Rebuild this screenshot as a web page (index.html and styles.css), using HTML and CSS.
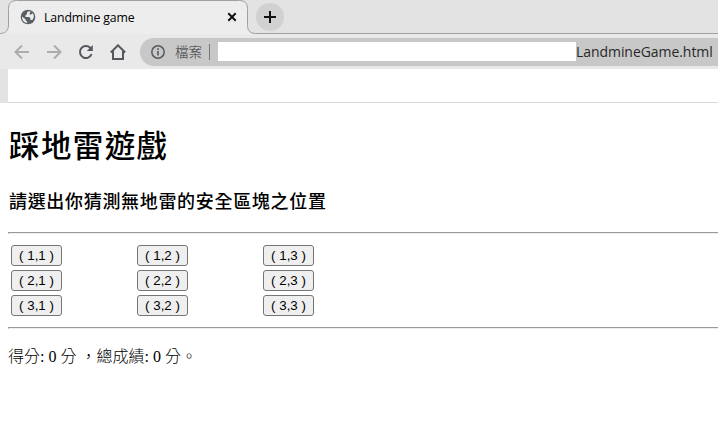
FILE: index.html
```html
<!DOCTYPE html>
<html lang="zh-Hant">
<head>
<meta charset="utf-8">
<title>Landmine game</title>
<link rel="stylesheet" href="styles.css">
</head>
<body>
<header class="browser">
  <div class="tabs">
    <svg class="tab-shape" width="718" height="34" viewBox="0 0 718 34">
      <path d="M0 34V33.5C5 33.5 8.500 31 8.500 25V8.500Q8.500.5 16.500.5H239.500Q247.500.5 247.500 8.500V25.500Q247.500 33.500 255.500 33.500H718V34Z" fill="#ededed"/>
      <path d="M0 33.500C5 33.500 8.500 31 8.500 25V8.500Q8.500.5 16.500.5H239.500Q247.500.5 247.500 8.500V25.500Q247.500 33.500 255.500 33.500H718" fill="none" stroke="#a0a0a0"/>
    </svg>
    <div class="tab">
      <svg width="16" height="16" viewBox="0 0 16 16">
        <circle cx="8" cy="8" r="7.300" fill="#5a5f64"/>
        <path d="M8.400 2.200L7 3.500V5L5.500 6.200V8H9.200L10.500 9.500V11H12.300C14.600 8.500 14 5.500 12.600 4.200L11.200 5.500H9.700V3.800L11 2.700Z" fill="#ededed"/>
        <path d="M2 7.600L5.700 10.500V11.600L7.200 12.800V14C4.300 13.900 1.900 11.500 2 7.600Z" fill="#ededed"/>
      </svg>
      <span class="tab-title">Landmine game</span>
      <svg class="close" width="10" height="10" viewBox="0 0 10 10"><path d="M1.300 1.300L8.700 8.700M8.700 1.300L1.300 8.700" stroke="#111" stroke-width="2"/></svg>
    </div>
    <div class="new-tab">
      <svg width="12" height="12" viewBox="0 0 12 12"><path d="M6 0V12M0 6H12" stroke="#111" stroke-width="2"/></svg>
    </div>
  </div>
  <div class="toolbar">
    <svg class="nav" width="16" height="16" viewBox="0 0 16 16"><path d="M15 8H2M8 1.500L1.500 8L8 14.500" fill="none" stroke="#acacac" stroke-width="2"/></svg>
    <svg class="nav" width="16" height="16" viewBox="0 0 16 16"><path d="M1 8H14M8 1.500L14.500 8L8 14.500" fill="none" stroke="#acacac" stroke-width="2"/></svg>
    <svg class="nav" width="16" height="16" viewBox="0 0 16 16"><path d="M13.600 10A6 6 0 1 1 12.200 3.800L13.500 5.100" fill="none" stroke="#55595e" stroke-width="2"/><path d="M14.800 1V7H8.800Z" fill="#55595e"/></svg>
    <svg class="nav" width="16" height="16" viewBox="0 0 16 16"><path d="M.8 8.500L8 1.300L15.200 8.500M3 7V15H13V7" fill="none" stroke="#55595e" stroke-width="2"/></svg>
    <div class="address">
      <svg width="16" height="16" viewBox="0 0 16 16"><circle cx="8" cy="8" r="6.200" fill="none" stroke="#55595e" stroke-width="1.500"/><path d="M8 7V11.500M8 4.300V6" stroke="#55595e" stroke-width="1.600"/></svg>
      <span class="scheme">檔案</span>
      <span class="divider"></span>
      <span class="blank"></span>
      <span class="file">LandmineGame.html</span>
    </div>
  </div>
  <div class="bookmarks"></div>
</header>
<main>
  <h1>踩地雷遊戲</h1>
  <h3>請選出你猜測無地雷的安全區塊之位置</h3>
  <hr>
  <div class="board">
    <button>( 1,1 )</button><button>( 1,2 )</button><button>( 1,3 )</button>
    <button>( 2,1 )</button><button>( 2,2 )</button><button>( 2,3 )</button>
    <button>( 3,1 )</button><button>( 3,2 )</button><button>( 3,3 )</button>
  </div>
  <hr>
  <p>得分: 0 分 ，總成績: 0 分。</p>
</main>
</body>
</html>
```
FILE: styles.css
```css
* { box-sizing: border-box; }
body { margin: 0; background: #fff; color: #000; overflow: hidden; }
svg { display: block; flex: none; }
.browser { height: 103px; background: #e3e3e3; }
.tabs { position: relative; display: flex; height: 34px; background: #e3e3e3; }
.tab-shape { position: absolute; left: 0; top: 0; }
.tab {
  position: relative; display: flex; align-items: center;
  width: 240px; height: 34px; margin-left: 8px; padding: 0 11px 0 12px;
}
.tab-title { margin: 2px 0 0 8px; font: 12.3px/18px "Open Sans", sans-serif; letter-spacing: -0.13px; }
.close { margin-left: auto; }
.new-tab {
  position: relative; display: flex; align-items: center; justify-content: center;
  width: 28px; height: 28px; margin: 3px 0 0 8px; border-radius: 50%; background: #d1d1d1;
}
.toolbar { display: flex; align-items: center; height: 35px; padding-left: 14px; background: #e9e9e9; }
.nav { margin-right: 16px; }
.address {
  display: flex; align-items: center; flex: 1; height: 28px; margin-left: -2px; padding-left: 10px;
  background: #c8c8c8; border-radius: 14px 0 0 14px; white-space: nowrap;
}
.scheme { width: 27px; margin: -2px 0 0 9px; font: 300 13.5px/20px "Noto Sans CJK TC", sans-serif; color: #333; }
.divider { width: 1px; height: 16px; margin: 0 8px 0 7px; background: #777; }
.blank { width: 358px; height: 19px; background: #fff; }
.file { font: 14px/20px "Open Sans", sans-serif; letter-spacing: -0.06px; color: #292929; }
.bookmarks { height: 34px; margin-left: 8px; background: #fff; border-bottom: 1px solid #dadada; }
main { padding: 20px 0 0 8px; }
h1, h3 { margin: 0; font-family: "Noto Sans CJK TC", sans-serif; font-weight: 500; white-space: nowrap; }
h1 { padding-left: 1px; font-size: 30.5px; line-height: 43px; letter-spacing: 1.4px; }
h3 { margin-top: 22px; padding-left: 1px; font-size: 18px; line-height: 25px; letter-spacing: .68px; }
hr { height: 2px; margin: 0; border: 1px solid #eee; border-color: #999 #eee #eee #999; border-right: 0; }
h3 + hr { margin-top: 19px; }
.board { display: grid; grid-template-columns: repeat(3, 126px); grid-auto-rows: 21px; row-gap: 4px; padding: 11px 0 11px 3px; }
button {
  width: 51px; height: 21px; padding: 0; border: 1px solid #767676; border-radius: 3px;
  background: #efefef; color: #000; font: 13.333px/17px "Liberation Sans", Arial, sans-serif;
}
p { margin: 16px 0 0; font: 300 16px/24px "Liberation Serif", "Noto Sans CJK TC", serif; white-space: pre; }
```
